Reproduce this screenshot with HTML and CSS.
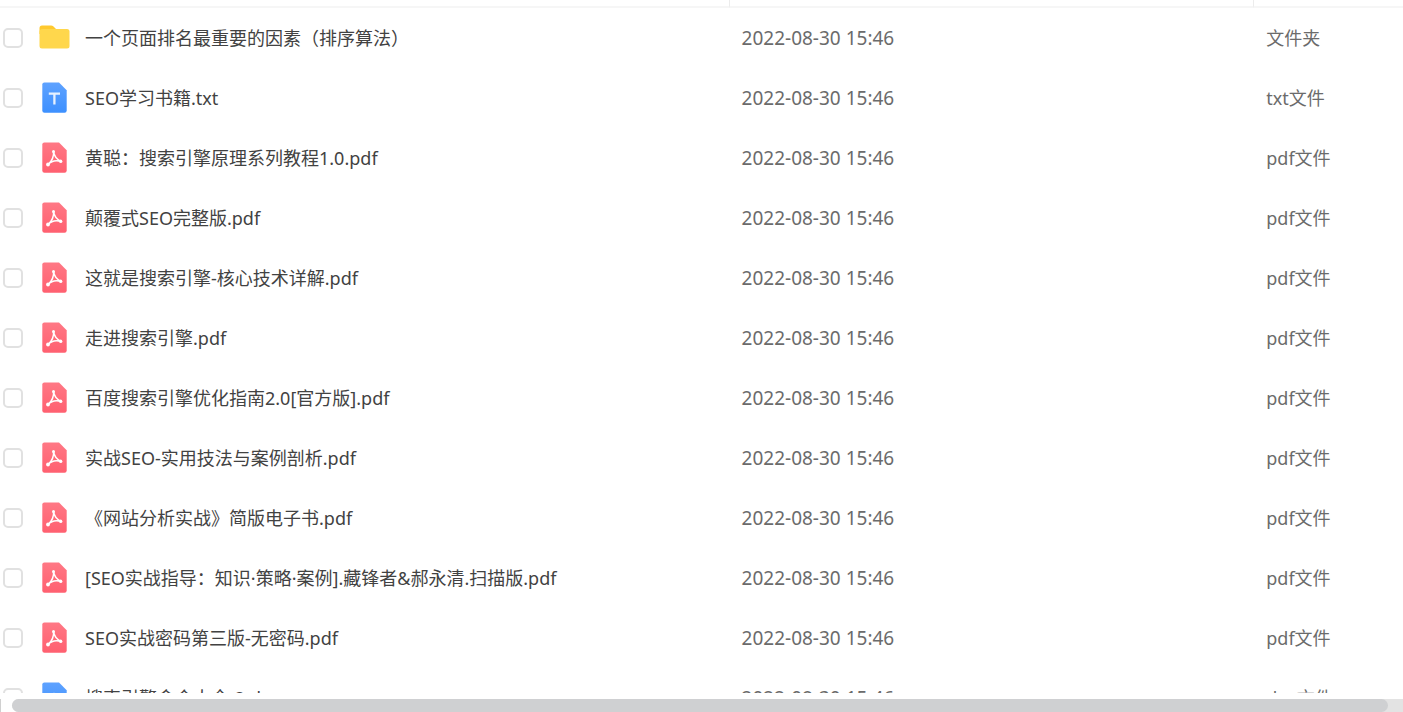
FILE: index.html
```html
<!DOCTYPE html>
<html lang="zh-CN">

<head>
    <meta charset="UTF-8">
    <meta name="viewport" content="width=device-width, initial-scale=1.0">
    <title>文件列表</title>
    <link rel="stylesheet" href="styles.css">
</head>

<body>
    <!-- Icon set -->
    <svg class="icon-defs" aria-hidden="true">
        <defs>
            <linearGradient id="blueFill" x1="0" y1="0" x2="0" y2="1">
                <stop offset="0" stop-color="#5ea2ff" />
                <stop offset="1" stop-color="#3d90ff" />
            </linearGradient>
            <linearGradient id="redFill" x1="0" y1="0" x2="0" y2="1">
                <stop offset="0" stop-color="#ff7885" />
                <stop offset="1" stop-color="#ff6070" />
            </linearGradient>
        </defs>
        <symbol id="icon-folder" viewBox="0 0 32 32">
            <path d="M1.500 8V6Q1.500 3.500 4 3.500H13Q14.500 3.500 15.500 4.500L18.500 7.500V12H1.500Z" fill="#ffc92e" />
            <path d="M1.500 10Q1.500 7 4.500 7H29Q31.500 7 31.500 9.500V24Q31.500 26.500 29 26.500H4Q1.500 26.500 1.500 24Z" fill="#ffd74c" />
        </symbol>
        <symbol id="icon-txt" viewBox="0 0 32 32">
            <path d="M6.300 .6H21L28.700 8.300V28.500Q28.700 30.700 26.500 30.700H6.500Q4.300 30.700 4.300 28.500V2.600Q4.300 .6 6.300 .6Z" fill="url(#blueFill)" />
            <path d="M10.800 11.600H22M16.400 11.600V22.500" fill="none" stroke="#e6f1ff" stroke-width="2.300" />
        </symbol>
        <symbol id="icon-pdf" viewBox="0 0 32 32">
            <path d="M6.300 .6H21L28.700 8.300V28.500Q28.700 30.700 26.500 30.700H6.500Q4.300 30.700 4.300 28.500V2.600Q4.300 .6 6.300 .6Z" fill="url(#redFill)" />
            <path d="M15.600 9.500C16 14 18 17 23.500 19.800C18.500 18 13.500 19 10 22.700C13.500 19.500 16 15.500 15.600 9.500Z" fill="none" stroke="#fff" stroke-width="1.500" stroke-linejoin="round" />
            <circle cx="15.500" cy="9.500" r="1.500" fill="#fff" />
            <circle cx="10" cy="22.500" r="1.900" fill="#fff" />
            <circle cx="22.600" cy="19.300" r="1.700" fill="#fff" />
        </symbol>
        <symbol id="icon-doc" viewBox="0 0 32 32">
            <path d="M6.300 .6H21L28.700 8.300V28.500Q28.700 30.700 26.500 30.700H6.500Q4.300 30.700 4.300 28.500V2.600Q4.300 .6 6.300 .6Z" fill="url(#blueFill)" />
            <path d="M10 12L13 21L16 13L19 21L22 12" fill="none" stroke="#e6f1ff" stroke-width="2" />
        </symbol>
    </svg>

    <div class="file-panel">
        <div class="file-list">
            <table class="file-table">
                <thead>
                    <tr>
                        <th class="col-name"></th>
                        <th class="col-date"></th>
                        <th class="col-type"></th>
                    </tr>
                </thead>
                <tbody>
                    <tr>
                        <td><div class="file-name"><input type="checkbox" id="file1"><svg class="icon"><use href="#icon-folder" /></svg><label for="file1">一个页面排名最重要的因素（排序算法）</label></div></td>
                        <td class="date">2022-08-30 15:46</td>
                        <td>文件夹</td>
                    </tr>
                    <tr>
                        <td><div class="file-name"><input type="checkbox" id="file2"><svg class="icon"><use href="#icon-txt" /></svg><label for="file2">SEO学习书籍.txt</label></div></td>
                        <td class="date">2022-08-30 15:46</td>
                        <td>txt文件</td>
                    </tr>
                    <tr>
                        <td><div class="file-name"><input type="checkbox" id="file3"><svg class="icon"><use href="#icon-pdf" /></svg><label for="file3">黄聪：搜索引擎原理系列教程1.0.pdf</label></div></td>
                        <td class="date">2022-08-30 15:46</td>
                        <td>pdf文件</td>
                    </tr>
                    <tr>
                        <td><div class="file-name"><input type="checkbox" id="file4"><svg class="icon"><use href="#icon-pdf" /></svg><label for="file4">颠覆式SEO完整版.pdf</label></div></td>
                        <td class="date">2022-08-30 15:46</td>
                        <td>pdf文件</td>
                    </tr>
                    <tr>
                        <td><div class="file-name"><input type="checkbox" id="file5"><svg class="icon"><use href="#icon-pdf" /></svg><label for="file5">这就是搜索引擎-核心技术详解.pdf</label></div></td>
                        <td class="date">2022-08-30 15:46</td>
                        <td>pdf文件</td>
                    </tr>
                    <tr>
                        <td><div class="file-name"><input type="checkbox" id="file6"><svg class="icon"><use href="#icon-pdf" /></svg><label for="file6">走进搜索引擎.pdf</label></div></td>
                        <td class="date">2022-08-30 15:46</td>
                        <td>pdf文件</td>
                    </tr>
                    <tr>
                        <td><div class="file-name"><input type="checkbox" id="file7"><svg class="icon"><use href="#icon-pdf" /></svg><label for="file7">百度搜索引擎优化指南2.0[官方版].pdf</label></div></td>
                        <td class="date">2022-08-30 15:46</td>
                        <td>pdf文件</td>
                    </tr>
                    <tr>
                        <td><div class="file-name"><input type="checkbox" id="file8"><svg class="icon"><use href="#icon-pdf" /></svg><label for="file8">实战SEO-实用技法与案例剖析.pdf</label></div></td>
                        <td class="date">2022-08-30 15:46</td>
                        <td>pdf文件</td>
                    </tr>
                    <tr>
                        <td><div class="file-name"><input type="checkbox" id="file9"><svg class="icon"><use href="#icon-pdf" /></svg><label for="file9">《网站分析实战》简版电子书.pdf</label></div></td>
                        <td class="date">2022-08-30 15:46</td>
                        <td>pdf文件</td>
                    </tr>
                    <tr>
                        <td><div class="file-name"><input type="checkbox" id="file10"><svg class="icon"><use href="#icon-pdf" /></svg><label for="file10">[SEO实战指导：知识·策略·案例].藏锋者&amp;郝永清.扫描版.pdf</label></div></td>
                        <td class="date">2022-08-30 15:46</td>
                        <td>pdf文件</td>
                    </tr>
                    <tr>
                        <td><div class="file-name"><input type="checkbox" id="file11"><svg class="icon"><use href="#icon-pdf" /></svg><label for="file11">SEO实战密码第三版-无密码.pdf</label></div></td>
                        <td class="date">2022-08-30 15:46</td>
                        <td>pdf文件</td>
                    </tr>
                    <tr>
                        <td><div class="file-name"><input type="checkbox" id="file12"><svg class="icon"><use href="#icon-doc" /></svg><label for="file12">搜索引擎命令大全-2.doc</label></div></td>
                        <td class="date">2022-08-30 15:46</td>
                        <td>doc文件</td>
                    </tr>
                </tbody>
            </table>
        </div>
        <div class="scrollbar">
            <div class="scrollbar-track">
                <div class="scrollbar-thumb"></div>
            </div>
        </div>
    </div>
</body>

</html>
```
FILE: styles.css
```css
* {
    box-sizing: border-box;
}

body {
    margin: 0;
    background: #fff;
    color: #424242;
    font-family: "Noto Sans", "Noto Sans CJK SC", sans-serif;
    font-size: 18px;
    line-height: 24px;
}

.icon-defs {
    display: block;
    width: 0;
    height: 0;
}

.file-panel {
    display: flex;
    flex-direction: column;
    height: 100vh;
    overflow: hidden;
}

.file-list {
    flex: 1;
    min-height: 0;
    margin-bottom: 6px;
    overflow: hidden;
}

.file-table {
    width: 100%;
    table-layout: fixed;
    border-collapse: separate;
    border-spacing: 0;
}

th {
    height: 8px;
    padding: 0;
    border-bottom: 2px solid #f6f6f6;
    border-right: 1px solid #ececec;
}

th:last-child {
    border-right: none;
}

.col-name {
    width: 52%;
}

.col-date {
    width: 37.4%;
}

td {
    height: 60px;
    padding: 0 0 0 12px;
    color: #6b6b6b;
    white-space: nowrap;
}

td:first-child {
    padding-left: 3px;
    color: #424242;
}

.date {
    font-size: 19px;
}

.file-name {
    display: flex;
    align-items: center;
}

.file-name input {
    appearance: none;
    width: 20px;
    height: 20px;
    margin: 0 15px 0 0;
    border: 2px solid #e1e1e1;
    border-radius: 5px;
    background: #fff;
}

.file-name input:checked {
    border-color: #3d90ff;
    background: #3d90ff;
}

.icon {
    width: 32px;
    height: 32px;
    margin-right: 15px;
}

.scrollbar {
    height: 13px;
    padding-left: 11px;
    border-left: 1px solid #d0d0d0;
}

.scrollbar-track {
    padding-right: 15px;
    border-radius: 7px 0 0 7px;
    background: #e3e3e3;
}

.scrollbar-thumb {
    height: 13px;
    border-radius: 7px;
    background: #cfd0d2;
}
```
